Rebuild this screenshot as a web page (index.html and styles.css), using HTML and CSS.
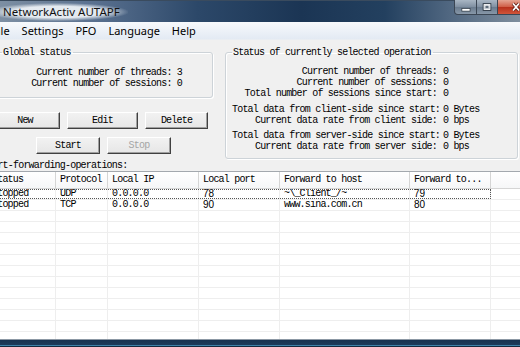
FILE: index.html
```html
<!DOCTYPE html>
<html lang="en">

<head>
    <meta charset="UTF-8">
    <title>NetworkActiv AUTAPF</title>
    <link rel="stylesheet" href="styles.css">
</head>

<body>
    <div class="titlebar">
        <span class="title">NetworkActiv AUTAPF</span>
        <div class="caption-btns">
            <span class="cbtn cbtn-min">
                <svg width="23" height="15" viewBox="0 0 23 15"><rect x="7.5" y="8.5" width="9" height="3" fill="#fff" stroke="#2a3440" stroke-width="0.8"/></svg>
            </span>
            <span class="cbtn cbtn-max">
                <svg width="21" height="15" viewBox="0 0 21 15"><rect x="6.5" y="3.5" width="8" height="7" fill="none" stroke="#2a3440" stroke-width="1"/><rect x="7.5" y="4.5" width="6" height="5" fill="none" stroke="#fff" stroke-width="1"/><rect x="8.5" y="5.5" width="4" height="3" fill="#5d6b7a" stroke="#fff" stroke-width="0.6"/></svg>
            </span>
            <span class="cbtn cbtn-close">
                <svg width="22" height="15" viewBox="0 0 22 15"><path d="M15 3.5 L21 10.5 M21 3.5 L15 10.5" stroke="#5a1a12" stroke-width="3.2"/><path d="M15 3.5 L21 10.5 M21 3.5 L15 10.5" stroke="#fff" stroke-width="1.8"/></svg>
            </span>
        </div>
    </div>

    <div class="menubar">
        <span class="menu-item">File</span>
        <span class="menu-item">Settings</span>
        <span class="menu-item">PFO</span>
        <span class="menu-item">Language</span>
        <span class="menu-item">Help</span>
    </div>

    <div class="client">
        <div class="top">
            <div class="left-col">
                <fieldset class="group group-global">
                    <legend>Global status</legend>
                    <div class="global-lines">
                        <div>Current number of threads: 3</div>
                        <div>Current number of sessions: 0</div>
                    </div>
                </fieldset>
                <div class="btn-row">
                    <button class="btn btn-new">New</button>
                    <button class="btn btn-edit">Edit</button>
                    <button class="btn btn-delete">Delete</button>
                </div>
                <div class="btn-row btn-row-2">
                    <button class="btn btn-start">Start</button>
                    <button class="btn btn-stop" disabled>Stop</button>
                </div>
            </div>

            <fieldset class="group group-selected">
                <legend>Status of currently selected operation</legend>
                <div class="kv-block kv-first">
                    <div class="kv"><span class="k">Current number of threads:</span><span class="v">0</span></div>
                    <div class="kv"><span class="k">Current number of sessions:</span><span class="v">0</span></div>
                    <div class="kv"><span class="k">Total number of sessions since start:</span><span class="v">0</span></div>
                </div>
                <div class="kv-block kv-second">
                    <div class="kv"><span class="k">Total data from client-side since start:</span><span class="v">0 Bytes</span></div>
                    <div class="kv"><span class="k">Current data rate from client side:</span><span class="v">0 bps</span></div>
                </div>
                <div class="kv-block kv-third">
                    <div class="kv"><span class="k">Total data from server-side since start:</span><span class="v">0 Bytes</span></div>
                    <div class="kv"><span class="k">Current data rate from server side:</span><span class="v">0 bps</span></div>
                </div>
            </fieldset>
        </div>

        <div class="list-label">Port-forwarding-operations:</div>

        <div class="list">
            <div class="lv-row lv-head">
                <div class="cells">
                    <span>Status</span><span>Protocol</span><span>Local IP</span><span>Local port</span><span>Forward to host</span><span>Forward to...</span>
                </div>
                <div class="fill"></div>
            </div>
            <div class="lv-row">
                <div class="cells focused">
                    <span>Stopped</span><span>UDP</span><span>0.0.0.0</span><span class="num">78</span><span>~\_Client_/~</span><span class="num">79</span>
                </div>
                <div class="fill"></div>
            </div>
            <div class="lv-row">
                <div class="cells">
                    <span>Stopped</span><span>TCP</span><span>0.0.0.0</span><span class="num">90</span><span>www.sina.com.cn</span><span class="num">80</span>
                </div>
                <div class="fill"></div>
            </div>
            <div class="lv-row"><div class="cells"><span></span><span></span><span></span><span></span><span></span><span></span></div><div class="fill"></div></div>
            <div class="lv-row"><div class="cells"><span></span><span></span><span></span><span></span><span></span><span></span></div><div class="fill"></div></div>
            <div class="lv-row"><div class="cells"><span></span><span></span><span></span><span></span><span></span><span></span></div><div class="fill"></div></div>
            <div class="lv-row"><div class="cells"><span></span><span></span><span></span><span></span><span></span><span></span></div><div class="fill"></div></div>
            <div class="lv-row"><div class="cells"><span></span><span></span><span></span><span></span><span></span><span></span></div><div class="fill"></div></div>
            <div class="lv-row"><div class="cells"><span></span><span></span><span></span><span></span><span></span><span></span></div><div class="fill"></div></div>
            <div class="lv-row"><div class="cells"><span></span><span></span><span></span><span></span><span></span><span></span></div><div class="fill"></div></div>
            <div class="lv-row"><div class="cells"><span></span><span></span><span></span><span></span><span></span><span></span></div><div class="fill"></div></div>
            <div class="lv-row"><div class="cells"><span></span><span></span><span></span><span></span><span></span><span></span></div><div class="fill"></div></div>
            <div class="lv-row"><div class="cells"><span></span><span></span><span></span><span></span><span></span><span></span></div><div class="fill"></div></div>
            <div class="lv-row"><div class="cells"><span></span><span></span><span></span><span></span><span></span><span></span></div><div class="fill"></div></div>
            <div class="lv-row"><div class="cells"><span></span><span></span><span></span><span></span><span></span><span></span></div><div class="fill"></div></div>
        </div>
    </div>

    <div class="frame-bottom"></div>
</body>

</html>
```

FILE: styles.css
```css
* {
    box-sizing: border-box;
}

body {
    margin: 0;
    width: 520px;
    height: 347px;
    overflow: hidden;
    background: #f0f0f0;
    color: #000;
}

/* title bar */
.titlebar {
    height: 22px;
    display: flex;
    justify-content: space-between;
    align-items: flex-start;
    background: linear-gradient(90deg, #7d8fa3 0%, #5a7190 18%, #2c4869 38%, #1b3554 58%, #23405f 74%, #4f6680 86%, #7f8e9e 100%);
    border-top: 1px solid #3a4b5e;
}

.title {
    margin-top: 2px;
    padding: 1px 8px 1px 3px;
    font-family: "Noto Sans", sans-serif;
    font-size: 11.5px;
    line-height: 16px;
    color: #111;
    background: radial-gradient(ellipse at 45% 50%, rgba(235, 240, 245, 0.95) 45%, rgba(220, 228, 236, 0) 72%);
}

.caption-btns {
    display: flex;
    height: 15px;
    margin-top: -1px;
}

.cbtn {
    display: flex;
    height: 15px;
    border: 1px solid #3b4654;
    border-top: none;
}

.cbtn-min {
    width: 23px;
    border-radius: 0 0 0 4px;
    background: linear-gradient(#a9b6c4, #7f8fa1 50%, #6a7b8e 51%, #8797a8);
}

.cbtn-max {
    width: 21px;
    border-left: none;
    background: linear-gradient(#a9b6c4, #7f8fa1 50%, #6a7b8e 51%, #8797a8);
}

.cbtn-close {
    width: 22px;
    border-left: none;
    border-right: none;
    background: linear-gradient(#e4a593, #cf5c45 50%, #b7301b 51%, #d0553a);
}

/* menu */
.menubar {
    height: 18px;
    display: flex;
    margin-left: -14px;
    background: linear-gradient(#f7f9fc, #e3eaf3);
    border-bottom: 1px solid #e9edf2;
    font-family: "Noto Sans", sans-serif;
    font-size: 11px;
    line-height: 17px;
}

.menu-item {
    padding: 0 6px;
}

/* client area */
.client {
    margin-left: -10px;
    width: 530px;
    font-family: "Liberation Mono", monospace;
    font-size: 10px;
    letter-spacing: -0.8px;
    line-height: 11px;
}

.top {
    display: flex;
    gap: 12px;
    margin-top: 7px;
    height: 112px;
}

.left-col {
    width: 223px;
}

.group {
    margin: 0;
    min-width: 0;
    border: 1px solid #cdd3d8;
    border-radius: 3px;
    box-shadow: inset 1px 1px 0 #fff, 1px 1px 0 #fff;
}

.group legend {
    padding: 0 2px 0 1px;
    line-height: 11px;
}

.group-global {
    margin-left: 5px;
    width: 218px;
    height: 51px;
    padding: 0 30px 0 6px;
}

.global-lines {
    margin-top: 9px;
    text-align: right;
}

.group-selected {
    width: 293px;
    height: 112px;
    padding: 0 0 0 6px;
}

.kv-first {
    margin-top: 8px;
}

.kv-second {
    margin-top: 5px;
}

.kv-third {
    margin-top: 4px;
}

.kv {
    display: flex;
    white-space: nowrap;
}

.k {
    width: 205px;
    text-align: right;
}

.v {
    margin-left: 6px;
}

/* buttons */
.btn-row {
    display: flex;
    gap: 7px;
    margin-top: 14px;
}

.btn-row-2 {
    margin-top: 8px;
    padding-left: 46px;
}

.btn {
    height: 17px;
    padding: 0;
    font-family: "Liberation Mono", monospace;
    font-size: 10px;
    letter-spacing: -0.8px;
    color: #000;
    background: linear-gradient(#f2f2f2, #e6e6e6);
    border: 1px solid;
    border-color: #fff #404040 #404040 #fff;
    box-shadow: inset -1px -1px 0 #a0a0a0;
}

.btn-new {
    width: 70px;
}

.btn-edit {
    width: 71px;
}

.btn-delete {
    width: 63px;
}

.btn-start,
.btn-stop {
    width: 64px;
}

.btn-stop {
    color: #a5a5a5;
}

/* list view */
.list-label {
    margin-top: 1px;
    margin-left: -3px;
    height: 11px;
}

.list {
    height: 168px;
    overflow: hidden;
    background: #fff;
    border-top: 1px solid #a3a8ae;
}

.lv-row {
    display: flex;
    height: 11px;
    border-bottom: 1px solid #eeeeee;
}

.cells {
    display: grid;
    grid-template-columns: 66px 52px 91px 81px 130px 81px;
    white-space: nowrap;
}

.cells span {
    padding-left: 4px;
    border-right: 1px solid #eeeeee;
    line-height: 10px;
    overflow: hidden;
}

.cells span:first-child {
    padding-left: 2px;
}

.fill {
    flex: 1;
}

.lv-head {
    height: 17px;
    background: linear-gradient(#ffffff, #f6f7f8);
    border-bottom: 1px solid #d5d5d5;
}

.lv-head .cells span {
    line-height: 16px;
    border-right-color: #d5d5d5;
}

.focused {
    outline: 1px dotted #555;
    outline-offset: -1px;
}

.num {
    font-family: "Liberation Sans", sans-serif;
    letter-spacing: 0;
}

.frame-bottom {
    height: 8px;
    border-top: 1px solid #8c98a4;
    background: linear-gradient(#18324f 0%, #1d3a5a 70%, #3f82a8 72%, #3f82a8 85%, #14293f 87%);
}
```
